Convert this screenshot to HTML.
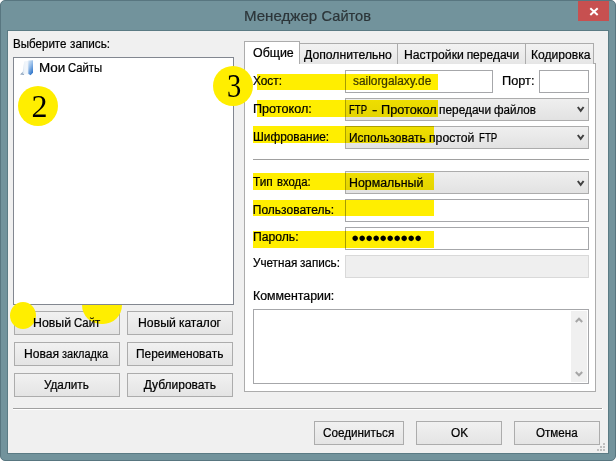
<!DOCTYPE html>
<html lang="ru">
<head>
<meta charset="utf-8">
<title>Менеджер Сайтов</title>
<style>
html,body{margin:0;padding:0;}
body{width:616px;height:461px;overflow:hidden;background:#fff;font-family:"Liberation Sans",sans-serif;font-size:12px;position:relative;}
.abs,.t,.btn,.inp,.cmb,.tab,.hl,.circ{position:absolute;box-sizing:border-box;}
.t{white-space:pre;line-height:normal;z-index:5;transform-origin:0 0;-webkit-text-stroke:0.22px currentColor;}
#frame{left:0;top:0;width:616px;height:461px;background:#72939c;border:1px solid #587680;border-radius:5px;}

#client{left:7px;top:30px;width:602px;height:424px;background:#f0f0f0;border:1px solid #5b7b84;}
#close{left:578px;top:1px;width:31px;height:20px;background:#c75050;}
#tree{left:13px;top:57px;width:221px;height:248px;background:#fff;border:1px solid #828790;}
#panel{left:244px;top:63px;width:352px;height:329px;background:#fff;border:1px solid #acacac;}
.tab{top:43px;height:21px;border:1px solid #acacac;border-bottom:none;background:linear-gradient(#f2f2f2,#e6e6e6);}
.tab.sel{top:41px;height:23px;background:#fff;z-index:2;}
.inp{background:#fff;border:1px solid #a6a7aa;}
.inp.dis{background:#efefef;border-color:#d9d9d9;}
.cmb{border:1px solid #acacac;background:linear-gradient(#efefef,#e2e2e2);}
.btn{border:1px solid #acacac;background:linear-gradient(#f1f1f1,#e4e4e4);}
.hl{background:#ffee00;mix-blend-mode:multiply;z-index:6;}
.circ{background:#ffee00;border-radius:50%;z-index:4;}
.num{position:absolute;font-family:"Liberation Serif",serif;color:#000;z-index:7;line-height:1;}
.sep{position:absolute;height:1px;background:#a0a0a0;}
svg{position:absolute;overflow:visible;}
</style>
</head>
<body>
<div class="abs" id="frame"></div>
<div class="abs" id="client"></div>
<div class="abs" id="close"><svg width="31" height="20" viewBox="0 0 31 20" style="left:0;top:0"><path d="M12.3 7.2 L19.7 14 M19.7 7.2 L12.3 14" stroke="#fff" stroke-width="2" fill="none"/></svg></div>

<!-- left tree -->
<div class="abs" id="tree"></div>
<svg width="16" height="18" viewBox="0 0 16 18" style="left:19px;top:58.7px;z-index:3">
 <defs>
  <linearGradient id="g1" x1="0" y1="0" x2="0.5" y2="1"><stop offset="0" stop-color="#dbe9f7"/><stop offset="0.45" stop-color="#9cc1ea"/><stop offset="1" stop-color="#3479cc"/></linearGradient>
  <linearGradient id="g2" x1="0" y1="0" x2="1" y2="0"><stop offset="0" stop-color="#cfdded"/><stop offset="0.35" stop-color="#eef4fa"/><stop offset="0.8" stop-color="#f3f7fc"/><stop offset="1" stop-color="#d6e4f3"/></linearGradient>
  <filter id="bl"><feGaussianBlur stdDeviation="0.45"/></filter>
 </defs>
 <g filter="url(#bl)">
  <path d="M1.0 15.4 L4.3 12.4 L5.2 15.9 Z" fill="#8fa5bd"/>
  <path d="M5.2 2.6 L9.5 1.8 L9.5 15.5 L3.5 14.7 Z" fill="url(#g2)"/>
  <path d="M9.3 1.5 L14 1.3 L14 13.8 L11.5 16.3 L9.3 14.8 Z" fill="url(#g1)"/>
 </g>
</svg>

<!-- tabs + panel -->
<div class="abs" id="panel"></div>
<div class="tab sel" style="left:244px;width:56px;"></div>
<div class="tab" style="left:299px;width:99px;"></div>
<div class="tab" style="left:397px;width:129px;"></div>
<div class="tab" style="left:525px;width:69px;"></div>

<!-- inputs -->
<div class="inp" style="left:345px;top:70px;width:148px;height:23px;"></div>
<div class="inp" style="left:539px;top:70px;width:50px;height:23px;"></div>
<div class="cmb" style="left:345px;top:98px;width:244px;height:23px;"></div>
<div class="cmb" style="left:345px;top:126px;width:244px;height:23px;"></div>
<div class="sep" style="left:253px;top:159px;width:336px;"></div>
<div class="cmb" style="left:345px;top:171px;width:244px;height:23px;"></div>
<div class="inp" style="left:345px;top:199px;width:244px;height:23px;"></div>
<div class="inp" style="left:345px;top:227px;width:244px;height:23px;"></div>
<div class="inp dis" style="left:345px;top:255px;width:244px;height:23px;"></div>
<div class="inp" style="left:253px;top:309px;width:336px;height:75px;"></div>
<div class="abs" style="left:571px;top:311px;width:16px;height:71px;background:#f0f0f0;"></div>
<svg width="8" height="6" viewBox="0 0 8 6" style="left:574.6px;top:317px"><path d="M0.8 5 L4 1.7 L7.2 5" stroke="#a6a6a6" stroke-width="2" fill="none"/></svg>
<svg width="8" height="6" viewBox="0 0 8 6" style="left:574.6px;top:371px"><path d="M0.8 1 L4 4.3 L7.2 1" stroke="#a6a6a6" stroke-width="2" fill="none"/></svg>
<!-- combobox chevrons -->
<svg width="7.4" height="6.4" viewBox="0 0 7.4 6.4" style="left:576.7px;top:106.3px"><path d="M0.8 1.0 L3.7 4.8 L6.6 1.0" stroke="#404040" stroke-width="2" fill="none"/></svg>
<svg width="7.4" height="6.4" viewBox="0 0 7.4 6.4" style="left:576.7px;top:134.3px"><path d="M0.8 1.0 L3.7 4.8 L6.6 1.0" stroke="#404040" stroke-width="2" fill="none"/></svg>
<svg width="7.4" height="6.4" viewBox="0 0 7.4 6.4" style="left:576.7px;top:180px"><path d="M0.8 1.0 L3.7 4.8 L6.6 1.0" stroke="#404040" stroke-width="2" fill="none"/></svg>
<!-- password dots -->
<div class="t" style="left:351.2px;top:230px;font-size:13px;letter-spacing:-0.85px;color:#000;-webkit-text-stroke:0" id="pw">●●●●●●●●●●</div>

<!-- left buttons -->
<div class="btn" style="left:14px;top:311px;width:106px;height:24px;"></div>
<div class="btn" style="left:127px;top:311px;width:106px;height:24px;"></div>
<div class="btn" style="left:14px;top:342px;width:106px;height:24px;"></div>
<div class="btn" style="left:127px;top:342px;width:106px;height:24px;"></div>
<div class="btn" style="left:14px;top:373px;width:106px;height:24px;"></div>
<div class="btn" style="left:127px;top:373px;width:106px;height:24px;"></div>

<div class="sep" style="left:13px;top:408px;width:589px;"></div>
<div class="sep" style="left:13px;top:409px;width:590px;background:#fff;"></div>
<div class="abs" style="left:602px;top:408px;width:1px;height:2px;background:#fff;"></div>
<div class="btn" style="left:314px;top:421px;width:90px;height:24px;"></div>
<div class="btn" style="left:416px;top:421px;width:86px;height:24px;"></div>
<div class="btn" style="left:514px;top:421px;width:86px;height:24px;"></div>

<!-- grip -->
<svg width="9" height="9" viewBox="0 0 9 9" style="left:597px;top:443px"><g fill="#bfbfbf"><rect x="6" y="0" width="2" height="2"/><rect x="3" y="3" width="2" height="2"/><rect x="6" y="3" width="2" height="2"/><rect x="0" y="6" width="2" height="2"/><rect x="3" y="6" width="2" height="2"/><rect x="6" y="6" width="2" height="2"/></g></svg>

<!-- yellow marks -->
<div class="circ" style="left:18px;top:86.1px;width:40px;height:40px;"></div>
<div class="circ" style="left:212.9px;top:65.8px;width:40px;height:40px;"></div>
<div class="circ" style="left:10px;top:302px;width:26px;height:27px;z-index:4"></div>
<div class="abs" style="left:82px;top:304.5px;width:40px;height:19.5px;background:#ffee00;border-radius:0 0 20px 20px;z-index:4"></div>
<div class="num" style="left:31.5px;top:89.7px;font-size:32px;">2</div>
<div class="num" style="left:226.2px;top:69.8px;font-size:32px;transform:scale(0.89,1.03);transform-origin:50% 50%;">3</div>

<div class="hl" style="left:257px;top:73.9px;width:180.5px;height:16.5px;"></div>
<div class="hl" style="left:257px;top:100px;width:180.5px;height:17px;"></div>
<div class="hl" style="left:253px;top:125.8px;width:180.7px;height:17px;"></div>
<div class="hl" style="left:253px;top:173px;width:180.7px;height:16.5px;"></div>
<div class="hl" style="left:253px;top:199.5px;width:180.7px;height:16px;"></div>
<div class="hl" style="left:253px;top:231px;width:180.7px;height:16.5px;"></div>

<span class="t" style="left:243.68px;top:7.55px;font-size:14.6px;transform:scaleX(1.0334);color:#2c3539">Менеджер </span>
<span class="t" style="left:321.57px;top:7.55px;font-size:14.6px;color:#2c3539">Сайтов</span>
<span class="t" style="left:12.96px;top:36.95px;font-size:12px;transform:scaleX(0.9641);color:#000">Выберите </span>
<span class="t" style="left:70.10px;top:36.95px;font-size:12px;transform:scaleX(0.9781);color:#000">запись:</span>
<span class="t" style="left:38.73px;top:60.95px;font-size:12px;transform:scaleX(1.1177);color:#000">Мои </span>
<span class="t" style="left:68.13px;top:60.95px;font-size:12px;transform:scaleX(0.9405);color:#000">Сайты</span>
<span class="t" style="left:252.63px;top:45.95px;font-size:12px;transform:scaleX(1.0319);color:#000">Общие</span>
<span class="t" style="left:304.33px;top:47.95px;font-size:12px;transform:scaleX(1.0179);color:#000">Дополнительно</span>
<span class="t" style="left:403.92px;top:47.95px;font-size:12px;transform:scaleX(1.0170);color:#000">Настройки </span>
<span class="t" style="left:466.64px;top:47.95px;font-size:12px;color:#000">передачи</span>
<span class="t" style="left:530.52px;top:47.95px;font-size:12px;transform:scaleX(1.0095);color:#000">Кодировка</span>
<span class="t" style="left:253.04px;top:73.95px;font-size:12px;transform:scaleX(0.9850);color:#000">Хост:</span>
<span class="t" style="left:252.79px;top:101.95px;font-size:12px;transform:scaleX(1.0523);color:#000">Протокол:</span>
<span class="t" style="left:252.84px;top:129.95px;font-size:12px;transform:scaleX(0.9866);color:#000">Шифрование:</span>
<span class="t" style="left:253.48px;top:174.95px;font-size:12px;transform:scaleX(0.9888);color:#000">Тип </span>
<span class="t" style="left:276.88px;top:174.95px;font-size:12px;transform:scaleX(0.9441);color:#000">входа:</span>
<span class="t" style="left:252.84px;top:202.95px;font-size:12px;color:#000">Пользователь:</span>
<span class="t" style="left:252.82px;top:229.95px;font-size:12px;transform:scaleX(1.0135);color:#000">Пароль:</span>
<span class="t" style="left:252.64px;top:255.95px;font-size:12px;transform:scaleX(0.9738);color:#000">Учетная </span>
<span class="t" style="left:300.20px;top:255.95px;font-size:12px;transform:scaleX(0.9755);color:#000">запись:</span>
<span class="t" style="left:252.80px;top:288.95px;font-size:12px;transform:scaleX(1.0302);color:#000">Комментарии:</span>
<span class="t" style="left:352.76px;top:73.95px;font-size:12px;transform:scaleX(0.9883);color:#3a3a3a">sailorgalaxy.de</span>
<span class="t" style="left:502.48px;top:73.95px;font-size:12px;transform:scaleX(1.0629);color:#000">Порт:</span>
<span class="t" style="left:348.91px;top:102.95px;font-size:12px;transform:scaleX(0.7955);color:#000">FTP </span>
<span class="t" style="left:372.17px;top:102.95px;font-size:12px;transform:scaleX(1.3479);color:#000">- </span>
<span class="t" style="left:380.98px;top:102.95px;font-size:12px;transform:scaleX(1.0596);color:#000">Протокол </span>
<span class="t" style="left:438.55px;top:102.95px;font-size:12px;transform:scaleX(0.9889);color:#000">передачи </span>
<span class="t" style="left:493.50px;top:102.95px;font-size:12px;transform:scaleX(0.9665);color:#000">файлов</span>
<span class="t" style="left:348.94px;top:130.95px;font-size:12px;transform:scaleX(0.9928);color:#000">Использовать </span>
<span class="t" style="left:428.92px;top:130.95px;font-size:12px;transform:scaleX(1.0191);color:#000">простой </span>
<span class="t" style="left:478.60px;top:130.95px;font-size:12px;transform:scaleX(0.8096);color:#000">FTP</span>
<span class="t" style="left:348.80px;top:175.95px;font-size:12px;transform:scaleX(1.0304);color:#000">Нормальный</span>
<span class="t" style="left:32.91px;top:315.95px;font-size:12px;transform:scaleX(1.0276);color:#000">Новый </span>
<span class="t" style="left:73.92px;top:315.95px;font-size:12px;transform:scaleX(0.9473);color:#000">Сайт</span>
<span class="t" style="left:23.72px;top:346.95px;font-size:12px;transform:scaleX(1.0092);color:#000">Новая </span>
<span class="t" style="left:62.34px;top:346.95px;font-size:12px;transform:scaleX(0.9159);color:#000">закладка</span>
<span class="t" style="left:44.44px;top:377.95px;font-size:12px;transform:scaleX(0.9767);color:#000">Удалить</span>
<span class="t" style="left:137.51px;top:315.95px;font-size:12px;transform:scaleX(1.0191);color:#000">Новый </span>
<span class="t" style="left:179.27px;top:315.95px;font-size:12px;transform:scaleX(0.9958);color:#000">каталог</span>
<span class="t" style="left:135.74px;top:346.95px;font-size:12px;transform:scaleX(0.9929);color:#000">Переименовать</span>
<span class="t" style="left:143.68px;top:377.95px;font-size:12px;color:#000">Дублировать</span>
<span class="t" style="left:323.16px;top:425.95px;font-size:12px;transform:scaleX(0.9759);color:#000">Соединиться</span>
<span class="t" style="left:450.76px;top:425.95px;font-size:12px;transform:scaleX(0.9881);color:#000">OK</span>
<span class="t" style="left:535.77px;top:425.95px;font-size:12px;transform:scaleX(0.9682);color:#000">Отмена</span>
</body>
</html>
